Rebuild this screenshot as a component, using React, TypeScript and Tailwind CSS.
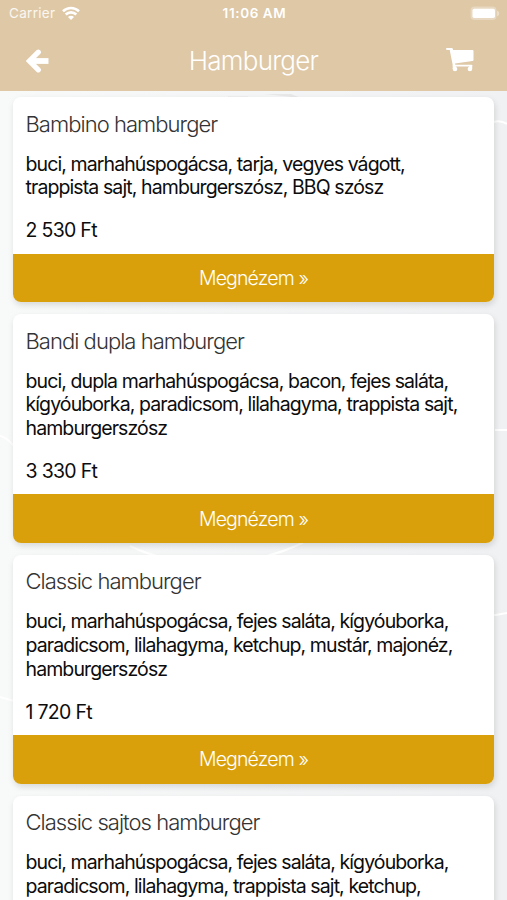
import React from 'react';

interface Product {
  name: string;
  lines: string[];
  price?: string;
}

const products: Product[] = [
  {
    name: 'Bambino hamburger',
    lines: ['buci, marhahúspogácsa, tarja, vegyes vágott,', 'trappista sajt, hamburgerszósz, BBQ szósz'],
    price: '2 530 Ft',
  },
  {
    name: 'Bandi dupla hamburger',
    lines: [
      'buci, dupla marhahúspogácsa, bacon, fejes saláta,',
      'kígyóuborka, paradicsom, lilahagyma, trappista sajt,',
      'hamburgerszósz',
    ],
    price: '3 330 Ft',
  },
  {
    name: 'Classic hamburger',
    lines: [
      'buci, marhahúspogácsa, fejes saláta, kígyóuborka,',
      'paradicsom, lilahagyma, ketchup, mustár, majonéz,',
      'hamburgerszósz',
    ],
    price: '1 720 Ft',
  },
  {
    name: 'Classic sajtos hamburger',
    lines: [
      'buci, marhahúspogácsa, fejes saláta, kígyóuborka,',
      'paradicsom, lilahagyma, trappista sajt, ketchup,',
    ],
  },
];

const StatusBar: React.FC = () => (
  <div className="grid h-7 grid-cols-3 items-center pl-[9px] pr-[7px] text-[13.5px] leading-none">
    <div className="flex items-center gap-[7px]">
      <span className="tracking-[0.3px] text-white/85">Carrier</span>
      <svg className="-mt-[2px]" width="18" height="14" viewBox="0 0 18 14" fill="none" stroke="#fff" strokeWidth="2.6">
        <path d="M1 5.2C5.6.9 12.4.9 17 5.2" />
        <path d="M3.7 8.5c2.9-2.9 7.7-2.9 10.6 0" />
        <path d="M6 10.9c1.7-1.5 4.3-1.500 6 0L9 13.9z" fill="#fff" stroke="none" />
      </svg>
    </div>
    <span className="text-center font-semibold tracking-[0.600px] whitespace-nowrap">11:06 AM</span>
    <svg className="-mt-[2px] justify-self-end" width="30" height="15" viewBox="0 0 30 15">
      <rect x=".5" y=".5" width="26" height="13.5" rx="4" fill="#fff" opacity=".3" />
      <path d="M27 4.5c3 1.5 3 4.5 0 6z" fill="#fff" opacity=".4" />
      <rect x="2.5" y="2.7" width="22.5" height="9.3" rx="1.8" fill="#fff" />
    </svg>
  </div>
);

const Header: React.FC = () => (
  <header className="h-[91px] shrink-0 bg-[#dec8a6] text-white">
    <StatusBar />
    <div className="grid h-[66px] grid-cols-[1fr_auto_1fr] items-center pl-[26px] pr-[33px]">
      <button className="justify-self-start" aria-label="Vissza">
        <svg width="23" height="24" viewBox="0 0 23 24" fill="none" stroke="#fff">
          <path d="M12.3 3.2 3.4 12l8.9 8.8" strokeWidth="5.2" strokeLinejoin="miter" strokeLinecap="round" />
          <path d="M4 12h18.5" strokeWidth="5.8" />
        </svg>
      </button>
      <h1 className="pl-[7px] text-[26px] leading-none font-[330] tracking-[-0.750px]">Hamburger</h1>
      <button className="-mt-[2px] justify-self-end" aria-label="Kosár">
        <svg width="28" height="24" viewBox="0 0 28 24" fill="#fff">
          <path d="M1.2 0h4.6q.8 0 1 .8l.3 1.300h19.400q1 0 1 1v8.900q0 1-1 1.100L9 15.400l.3 1.400h16.200q.8 0 .8.900t-.8.900H8q-1 0-1.200-1L3.700 2.100H1.200Q0 2.100 0 1t1.200-1z" />
          <circle cx="9" cy="21" r="2.3" />
          <circle cx="23.9" cy="21" r="2.3" />
          <path d="M6.7 17h3v4h-3zM23.2 17h3v4h-3z" />
        </svg>
      </button>
    </div>
  </header>
);

const ProductCard: React.FC<{ product: Product }> = ({ product }) => (
  <article className="shrink-0 overflow-hidden rounded-lg bg-white shadow-[1px_3px_6px_rgba(0,0,0,0.13)]">
    <div className="px-[12.5px] pt-[12.3px] pb-[11.5px] whitespace-nowrap">
      <h2 className="text-[22px] leading-[28px] font-[350] tracking-[-0.96px] text-[#333]">{product.name}</h2>
      <p className="mt-[15px] text-[19.5px] leading-[23.8px] font-[390] tracking-[-0.9px] text-[#0c0c0c]">
        {product.lines.map((line) => (
          <span key={line} className="block">
            {line}
          </span>
        ))}
      </p>
      {product.price && (
        <p className="mt-[18px] text-[19.5px] leading-[24px] font-[390] tracking-[-0.7px] text-[#0c0c0c]">
          {product.price}
        </p>
      )}
    </div>
    {product.price && (
      <button className="block h-[48.5px] w-full bg-[#d9a00b] pt-px text-[19.5px] font-[350] tracking-[-0.85px] text-white">
        Megnézem »
      </button>
    )}
  </article>
);

// faint contour lines behind the list
const Backdrop: React.FC = () => (
  <svg className="absolute inset-0 h-full w-full" viewBox="0 0 507 809" fill="none" stroke="#fff" strokeWidth="2">
    <path d="M265 3h26l10 4zM228 5.500h20v1h-20z" fill="#e8e8e9" stroke="none" />
    <path d="M490 32q10-4 17 1" />
    <path d="M0 345q5 0 15 11M495 339h12M130 455c45 22 120 25 178-6M0 606l14 4M490 525l17-3" />
  </svg>
);

const App: React.FC = () => {
  return (
    <div className="flex h-[900px] w-[507px] flex-col overflow-hidden font-[Inter,'Liberation_Sans',sans-serif]">
      <Header />
      <main className="relative min-h-0 flex-1 overflow-hidden bg-linear-to-r from-[#f8f9f9] to-[#f0f1f2]">
        <Backdrop />
        <div className="relative flex flex-col gap-3 px-[13px] pt-[6.4px]">
          {products.map((product) => (
            <ProductCard key={product.name} product={product} />
          ))}
        </div>
      </main>
    </div>
  );
};

export default App;
